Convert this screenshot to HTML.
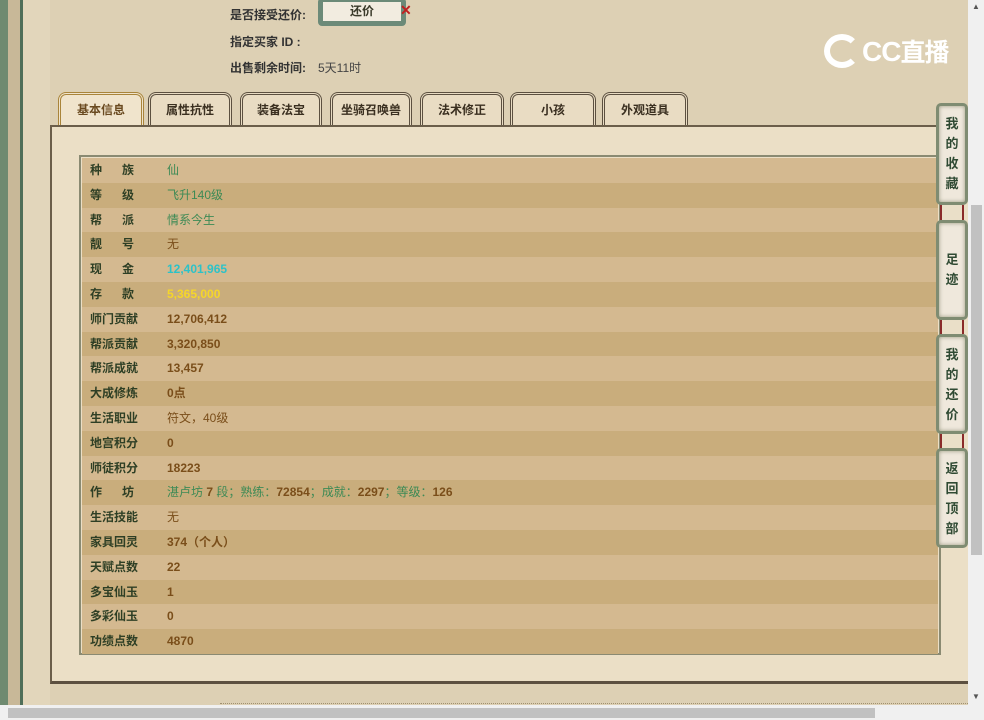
<!DOCTYPE html>
<html><head><meta charset="utf-8"><style>
*{margin:0;padding:0;box-sizing:border-box}
body{width:984px;height:720px;overflow:hidden;position:relative;background:#ddd0b4;font-family:"Liberation Sans","Noto Sans CJK SC",sans-serif;font-size:12px;color:#3a3a2a}
.abs{position:absolute}
.lab{font-weight:bold;color:#333}
.tab{position:absolute;top:92px;height:36px;border:3px double #5c5040;border-bottom:none;border-radius:8px 8px 0 0;background:#e9dcc3;text-align:center;line-height:30px;font-weight:bold;font-size:12px;color:#3a2f20}
.tab.on{border-color:#a9843a;background:#f0e4cc;color:#6a4a20}
.row{height:24.8px;line-height:24.8px;font-weight:bold;font-size:12px;position:relative;padding-left:8px}
.row:nth-child(odd){background:#d4b990}
.row:nth-child(even){background:#c9ad7c}
.row .k{color:#2e3f25;display:inline-block;width:77px}
.row .v{color:#7a4e1a}
.g{color:#3d8a55;font-weight:normal}
.side{position:absolute;left:936px;width:32px;background:#efe8dc;border:3px solid #7f8c72;border-radius:5px;text-align:center;font-weight:bold;font-size:13px;color:#2f4a33;line-height:20px;box-shadow:inset 0 0 4px #9a9a80}
.link{position:absolute;left:940px;width:24px;border-left:2px solid #8a2a2a;border-right:2px solid #8a2a2a;background:#eadfc8}
</style></head><body>
<div class="abs" style="left:0;top:0;width:8px;height:705px;background:#6f8a70"></div>
<div class="abs" style="left:8px;top:0;width:12px;height:705px;background:#c8b898"></div>
<div class="abs" style="left:20px;top:0;width:3px;height:705px;background:#4f6e58"></div>
<div class="abs" style="left:23px;top:0;width:27px;height:705px;background:#e2d6bb"></div>

<div class="abs lab" style="left:230px;top:6px">是否接受还价:</div>
<div class="abs" style="left:318px;top:-2px;width:88px;height:28px;background:#6c8a78;border-radius:4px;padding:4px 5px"><div style="background:#f2ece0;height:19px;text-align:center;line-height:19px;font-weight:bold">还价</div></div>
<div class="abs" style="left:400px;top:2px;color:#c02020;font-weight:bold;font-size:14px">✕</div>
<div class="abs lab" style="left:230px;top:33px">指定买家 ID :</div>
<div class="abs lab" style="left:230px;top:59px">出售剩余时间:</div>
<div class="abs" style="left:318px;top:59px;color:#444">5天11时</div>

<div class="abs" style="left:824px;top:34px;width:36px;height:34px;border-radius:50%;border:6px solid #fff;border-right-color:transparent"></div>
<div class="abs" style="left:862px;top:34px;color:#fff;font-size:28px;font-weight:bold;letter-spacing:-1px;line-height:34px">CC<span style="font-family:'Noto Sans CJK SC',sans-serif;font-size:25px">直播</span></div>

<div class="tab on" style="left:58px;width:86px">基本信息</div>
<div class="tab" style="left:148px;width:84px">属性抗性</div>
<div class="tab" style="left:240px;width:82px">装备法宝</div>
<div class="tab" style="left:330px;width:82px">坐骑召唤兽</div>
<div class="tab" style="left:420px;width:84px">法术修正</div>
<div class="tab" style="left:510px;width:86px">小孩</div>
<div class="tab" style="left:602px;width:86px">外观道具</div>

<div class="abs" style="left:50px;top:125px;width:920px;height:559px;background:#ebdfc6;border:2px solid #6b5e4a;border-bottom:3px solid #5c5040"></div>
<div class="abs" style="left:79px;top:155px;width:862px;height:500px;border:2px solid #8a8a72;padding:1px">
<div class="row"><span class="k">种&nbsp;&nbsp;&nbsp;&nbsp;&nbsp;&nbsp;族</span><span class="g">仙</span></div>
<div class="row"><span class="k">等&nbsp;&nbsp;&nbsp;&nbsp;&nbsp;&nbsp;级</span><span class="g">飞升140级</span></div>
<div class="row"><span class="k">帮&nbsp;&nbsp;&nbsp;&nbsp;&nbsp;&nbsp;派</span><span class="g">情系今生</span></div>
<div class="row"><span class="k">靓&nbsp;&nbsp;&nbsp;&nbsp;&nbsp;&nbsp;号</span><span class="v" style="font-weight:normal">无</span></div>
<div class="row"><span class="k">现&nbsp;&nbsp;&nbsp;&nbsp;&nbsp;&nbsp;金</span><span style="color:#2cc2c8">12,401,965</span></div>
<div class="row"><span class="k">存&nbsp;&nbsp;&nbsp;&nbsp;&nbsp;&nbsp;款</span><span style="color:#f5d62a">5,365,000</span></div>
<div class="row"><span class="k">师门贡献</span><span class="v">12,706,412</span></div>
<div class="row"><span class="k">帮派贡献</span><span class="v">3,320,850</span></div>
<div class="row"><span class="k">帮派成就</span><span class="v">13,457</span></div>
<div class="row"><span class="k">大成修炼</span><span class="v">0点</span></div>
<div class="row"><span class="k">生活职业</span><span class="v" style="font-weight:normal">符文，40级</span></div>
<div class="row"><span class="k">地宫积分</span><span class="v">0</span></div>
<div class="row"><span class="k">师徒积分</span><span class="v">18223</span></div>
<div class="row"><span class="k">作&nbsp;&nbsp;&nbsp;&nbsp;&nbsp;&nbsp;坊</span><span class="g">湛卢坊 </span><span class="v">7</span><span class="g"> 段；熟练：</span><span class="v">72854</span><span class="g">；成就：</span><span class="v">2297</span><span class="g">；等级：</span><span class="v">126</span></div>
<div class="row"><span class="k">生活技能</span><span class="v" style="font-weight:normal">无</span></div>
<div class="row"><span class="k">家具回灵</span><span class="v">374（个人）</span></div>
<div class="row"><span class="k">天赋点数</span><span class="v">22</span></div>
<div class="row"><span class="k">多宝仙玉</span><span class="v">1</span></div>
<div class="row"><span class="k">多彩仙玉</span><span class="v">0</span></div>
<div class="row"><span class="k">功绩点数</span><span class="v">4870</span></div>
</div>

<div class="abs" style="left:220px;top:703px;width:748px;border-top:1px dotted #a09070"></div>

<div class="abs" style="left:968px;top:0;width:16px;height:705px;background:#f0f0f0"></div>
<div class="abs" style="left:971px;top:205px;width:11px;height:350px;background:#c1c1c1"></div>
<div class="abs" style="left:972px;top:2px;font-size:8px;color:#555">▲</div>
<div class="abs" style="left:972px;top:692px;font-size:8px;color:#555">▼</div>
<div class="abs" style="left:0;top:705px;width:984px;height:15px;background:#f0f0f0"></div>
<div class="abs" style="left:8px;top:708px;width:867px;height:10px;background:#c1c1c1"></div>

<div class="side" style="top:103px;height:102px;padding-top:8px">我<br>的<br>收<br>藏</div>
<div class="link" style="top:205px;height:15px"></div>
<div class="side" style="top:220px;height:100px;padding-top:27px">足<br>迹</div>
<div class="link" style="top:320px;height:14px"></div>
<div class="side" style="top:334px;height:100px;padding-top:8px">我<br>的<br>还<br>价</div>
<div class="link" style="top:434px;height:14px"></div>
<div class="side" style="top:448px;height:100px;padding-top:8px">返<br>回<br>顶<br>部</div>
</body></html>
